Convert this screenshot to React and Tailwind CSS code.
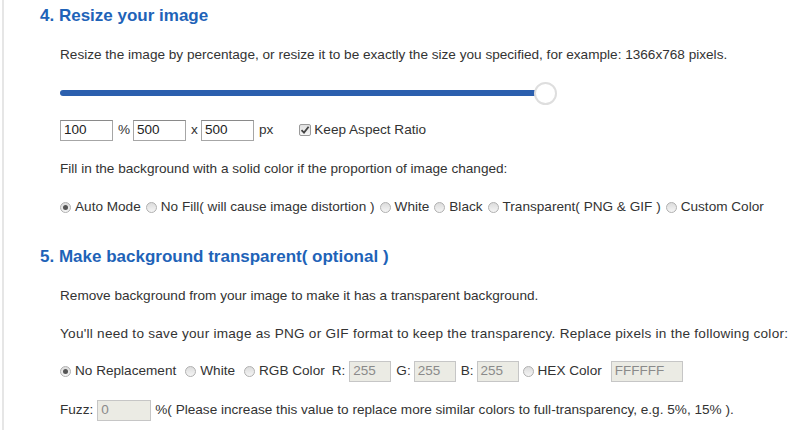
import React from "react";

function Radio({ checked }) {
  return (
    <span className="inline-flex w-[11px] h-[11px] rounded-full border border-[#b0b0b0] bg-gradient-to-b from-[#dcdcdc] to-[#f5f5f5] items-center justify-center shrink-0">
      {checked && <span className="w-[5px] h-[5px] rounded-full bg-[#555]" />}
    </span>
  );
}

function Checkbox() {
  return (
    <span className="inline-flex w-[12px] h-[12px] rounded-[2px] border border-[#9a9a9a] bg-gradient-to-b from-[#e0e0e0] to-[#f6f6f6] items-center justify-center shrink-0">
      <svg width="10" height="10" viewBox="0 0 10 10">
        <path d="M1.5 5.2 L4 7.6 L8.6 1.8" fill="none" stroke="#444" strokeWidth="1.8" />
      </svg>
    </span>
  );
}

function TextInput({ value, w }) {
  return (
    <span
      className={`inline-flex items-center h-[21px] ${w} border border-[#a6a6a6] border-t-[#8a8a8a] bg-white pl-[3px] text-[13.5px] text-[#222]`}
    >
      {value}
    </span>
  );
}

function DisabledInput({ value, w }) {
  return (
    <span
      className={`inline-flex items-center h-[21px] ${w} border border-[#c6c6c6] bg-[#ebebe4] pl-[3px] text-[13.5px] text-[#8a8a8a]`}
    >
      {value}
    </span>
  );
}

export default function App() {
  return (
    <div
      className="w-[800px] h-[430px] bg-white overflow-hidden text-[13.6px] text-[#333]"
      style={{ fontFamily: '"Liberation Sans", Arial, sans-serif' }}
    >
      <div className="ml-[2px] h-full border-l-2 border-[#e6e6e6]">
        <div className="pl-[36px] h-[32px] flex items-center text-[17px] font-bold text-[#1e63b8]">
          4. Resize your image
        </div>
        <div className="pl-[56px]">
          <div className="mt-[7px] h-[32px] flex items-center">
            Resize the image by percentage, or resize it to be exactly the size you specified, for example: 1366x768 pixels.
          </div>
          <div className="mt-[10px] h-[24px] flex items-center">
            <div className="w-[475px] h-[6px] rounded-l-full bg-[#2b5fae]" />
            <div className="w-[23px] h-[23px] rounded-full border-2 border-[#dedede] bg-white -ml-[1px]" />
          </div>
          <div className="mt-[13px] h-[24px] flex items-center">
            <TextInput value="100" w="w-[53px]" />
            <span className="ml-[5px] mr-[3px]">%</span>
            <TextInput value="500" w="w-[53px]" />
            <span className="ml-[5px] mr-[3px]">x</span>
            <TextInput value="500" w="w-[53px]" />
            <span className="ml-[5px]">px</span>
            <span className="ml-[26px] mr-[3px] inline-flex">
              <Checkbox />
            </span>
            <span>Keep Aspect Ratio</span>
          </div>
          <div className="mt-[15px] h-[24px] flex items-center">
            Fill in the background with a solid color if the proportion of image changed:
          </div>
          <div className="mt-[14px] h-[24px] flex items-center">
            <Radio checked />
            <span className="ml-[4px] mr-[5px]">Auto Mode</span>
            <Radio />
            <span className="ml-[4px] mr-[5px]">No Fill( will cause image distortion )</span>
            <Radio />
            <span className="ml-[4px] mr-[5px]">White</span>
            <Radio />
            <span className="ml-[4px] mr-[5px]">Black</span>
            <Radio />
            <span className="ml-[4px] mr-[5px]">Transparent( PNG &amp; GIF )</span>
            <Radio />
            <span className="ml-[4px]">Custom Color</span>
          </div>
        </div>
        <div className="mt-[22px] pl-[36px] h-[32px] flex items-center text-[17px] font-bold text-[#1e63b8]">
          5. Make background transparent( optional )
        </div>
        <div className="pl-[56px]">
          <div className="mt-[11px] h-[24px] flex items-center">
            Remove background from your image to make it has a transparent background.
          </div>
          <div className="mt-[14px] h-[24px] flex items-center tracking-[0.25px]">
            You'll need to save your image as PNG or GIF format to keep the transparency. Replace pixels in the following color:
          </div>
          <div className="mt-[13px] h-[24px] flex items-center">
            <Radio checked />
            <span className="ml-[4px] mr-[9px]">No Replacement</span>
            <Radio />
            <span className="ml-[4px] mr-[9px]">White</span>
            <Radio />
            <span className="ml-[4px] mr-[7px]">RGB Color</span>
            <span className="mr-[4px]">R:</span>
            <DisabledInput value="255" w="w-[42px]" />
            <span className="ml-[5px] mr-[3px]">G:</span>
            <DisabledInput value="255" w="w-[42px]" />
            <span className="ml-[5px] mr-[3px]">B:</span>
            <DisabledInput value="255" w="w-[42px]" />
            <span className="ml-[4px] inline-flex"><Radio /></span>
            <span className="ml-[4px] mr-[9px]">HEX Color</span>
            <DisabledInput value="FFFFFF" w="w-[72px]" />
          </div>
          <div className="mt-[15px] h-[24px] flex items-center">
            <span className="mr-[4px]">Fuzz:</span>
            <DisabledInput value="0" w="w-[54px]" />
            <span className="ml-[4px]">%( Please increase this value to replace more similar colors to full-transparency, e.g. 5%, 15% ).</span>
          </div>
        </div>
      </div>
    </div>
  );
}
